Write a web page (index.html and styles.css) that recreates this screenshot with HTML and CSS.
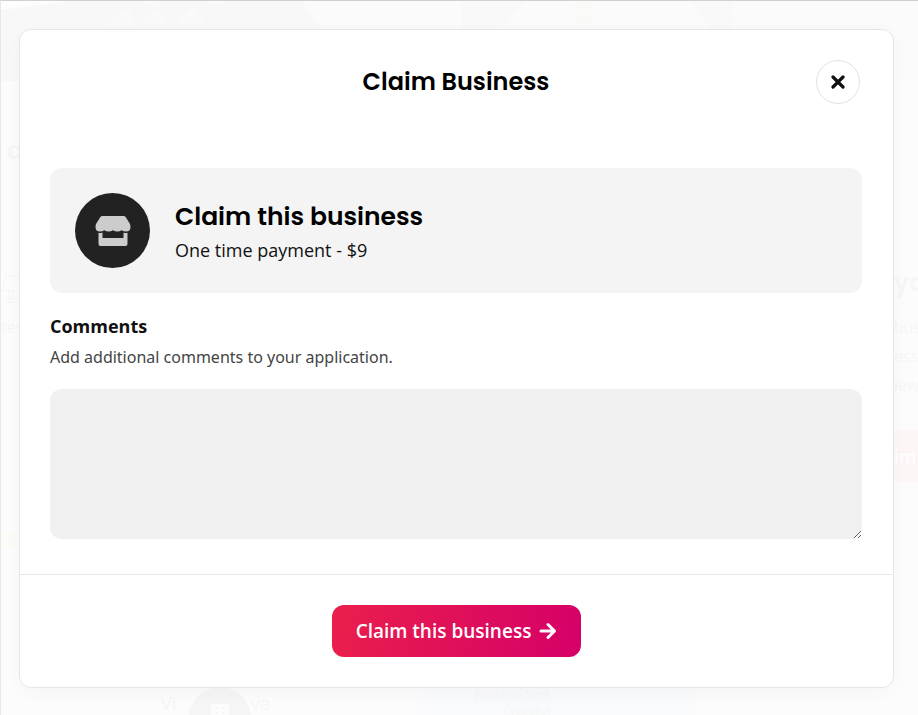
FILE: index.html
```html
<!DOCTYPE html>
<html lang="en">
<head>
    <meta charset="UTF-8">
    <meta name="viewport" content="width=device-width, initial-scale=1.0">
    <title>Claim Business</title>
    <link rel="stylesheet" href="styles.css">
</head>
<body>

    <!-- Faded listing page behind the modal -->
    <div class="backdrop" aria-hidden="true">
        <svg class="backdrop-cover" viewBox="0 0 918 80" preserveAspectRatio="none">
            <rect width="918" height="80" fill="#fbfbfb"/>
            <path d="M0 0H300L322 30V80H0z" fill="#f8f8f8"/>
            <path d="M0 9L70 0H0z" fill="#fdfdfd"/>
            <path d="M143 0h22l-11 6zM203 0h22l-10 5zM128 8l-26 18h33zM155 6l-16 17h28zM192 6l-16 17h28z" fill="#fafafa"/>
            <path d="M461 0h66l-30 30h-36zM690 0h42v30h-20z" fill="#f9f9f9"/>
            <path d="M568 0h24v30h-24z" fill="#fafaf8"/>
        </svg>
        <div class="backdrop-body">
            <div class="backdrop-left">
                <div class="ghost-title">o</div>
                <svg class="ghost-lamp" viewBox="0 0 20 28">
                    <path d="M5 1h12l3 15H1zM8 16v9M12 16v9M3 27l4-3h8l4 3z" fill="none" stroke="#f6f6f6"/>
                </svg>
                <div class="ghost-text">tes</div>
                <div class="ghost-band"></div>
            </div>
            <div class="backdrop-right">
                <div class="ghost-heading">yo</div>
                <div class="ghost-text">bus</div>
                <div class="ghost-text">ess</div>
                <div class="ghost-text">iew</div>
                <div class="ghost-button">im</div>
            </div>
        </div>
        <div class="backdrop-map">
            <span class="ghost-place">Vi</span>
            <svg class="ghost-pin" viewBox="0 0 62 62">
                <circle cx="31" cy="31" r="31" fill="#f5f5f5"/>
                <path d="M22 17h18v28H22z" fill="#fcfcfc"/>
                <path d="M27 20h2v2h-2zM33 20h2v2h-2zM27 25h2v2h-2zM33 25h2v2h-2z" fill="#f5f5f5"/>
            </svg>
            <span class="ghost-place">va</span>
            <span class="ghost-beach">Platja de Sant<br>Cristòfol</span>
        </div>
    </div>

    <div class="overlay">
        <div class="modal" role="dialog" aria-labelledby="modalTitle">
            <div class="modal-header">
                <h2 id="modalTitle">Claim Business</h2>
                <button type="button" class="close-button" aria-label="Close">
                    <svg viewBox="0 0 14 14" width="14" height="14">
                        <path d="M2 2l10 10M12 2L2 12" fill="none" stroke="#111" stroke-width="3.2" stroke-linecap="round"/>
                    </svg>
                </button>
            </div>

            <div class="modal-body">
                <div class="plan">
                    <div class="plan-icon">
                        <svg viewBox="0 0 36 30" width="36" height="30">
                            <path d="M7.500 0h21q1.500 0 2.300 1.200l3.900 6.300q.8 1.300.8 3.500Q35.500 15.500 31 15.500q-2.300 0-4.300-1.200-2 1.200-4.400 1.200t-4.300-1.200q-2 1.200-4.300 1.200t-4.400-1.200Q7.300 15.500 5 15.500.5 15.500.5 11q0-2.200.8-3.500l3.900-6.300Q6 0 7.500 0z" fill="#ccc"/>
                            <path d="M3.500 16.800q2.200.4 4-.4V22h21v-5.600q1.800.8 4 .4V28q0 2-2 2h-25q-2 0-2-2z" fill="#ccc"/>
                        </svg>
                    </div>
                    <div>
                        <h3>Claim this business</h3>
                        <p>One time payment - $9</p>
                    </div>
                </div>

                <label for="comments">Comments</label>
                <p class="hint" id="commentsHint">Add additional comments to your application.</p>
                <textarea id="comments" aria-describedby="commentsHint"></textarea>
            </div>

            <div class="modal-footer">
                <button type="button" class="submit-button">
                    Claim this business
                    <svg viewBox="0 0 18 18" width="18" height="18">
                        <path d="M2 9h13M9 2.500L15.500 9 9 15.500" fill="none" stroke="#fff" stroke-width="3" stroke-linecap="round" stroke-linejoin="round"/>
                    </svg>
                </button>
            </div>
        </div>
    </div>

</body>
</html>
```

FILE: styles.css
```css
* {
    box-sizing: border-box;
}
body {
    margin: 0;
    min-height: 100vh;
    font-family: "Open Sans", "Noto Sans", sans-serif;
    color: #111;
    background-color: #fcfcfc;
}
h2, h3, p {
    margin: 0;
}
button {
    cursor: pointer;
}

/* Page behind the modal */
.backdrop {
    position: absolute;
    inset: 0;
    display: flex;
    flex-direction: column;
    overflow: hidden;
    border-top: 1px solid #d0d0d0;
    border-left: 1px solid #e8e8e8;
    color: #f6f6f6;
}
.backdrop-cover {
    display: block;
    width: 100%;
    height: 80px;
    flex: none;
}
.backdrop-body {
    display: flex;
    flex: 1;
    justify-content: space-between;
}
.backdrop-left {
    width: 19px;
    padding-top: 52px;
    overflow: hidden;
}
.ghost-title, .ghost-heading {
    font-family: Poppins, Inter, sans-serif;
    font-size: 25px;
    font-weight: 600;
    line-height: 36px;
}
.ghost-title {
    padding-left: 6px;
}
.ghost-lamp {
    display: block;
    width: 20px;
    height: 28px;
    margin-top: 106px;
}
.ghost-text {
    font-size: 16px;
    line-height: 29px;
}
.backdrop-left .ghost-text {
    margin-top: 10px;
}
.ghost-band {
    height: 16px;
    margin-top: 190px;
    background-color: #fbfbf7;
}
.backdrop-right {
    width: 24px;
    padding-top: 184px;
    overflow: hidden;
}
.ghost-heading {
    margin-bottom: 12px;
}
.ghost-button {
    height: 52px;
    margin-top: 30px;
    font-size: 18px;
    font-weight: 600;
    line-height: 52px;
    color: #fff;
    background-color: #fcf6f7;
}
.backdrop-map {
    display: flex;
    height: 28px;
    flex: none;
    padding-left: 160px;
    background: linear-gradient(90deg, #fcfcfc 40%, #f9fafc 50%, #f9fafc 75%, #fcfcfc 76%);
}
.ghost-place {
    font-size: 18px;
    line-height: 32px;
}
.ghost-place:first-child {
    width: 28px;
}
.ghost-pin {
    width: 62px;
    height: 62px;
}
.ghost-beach {
    margin-left: 204px;
    font-size: 12px;
    line-height: 16px;
    text-align: right;
}

/* Modal */
.overlay {
    position: relative;
    min-height: 100vh;
    padding: 29px 24px 27px 19px;
}
.modal {
    border: 1px solid #e6e6e6;
    border-radius: 12px;
    background-color: #fff;
    box-shadow: 0 4px 20px rgba(0, 0, 0, 0.03);
}
.modal-header {
    display: grid;
    grid-template-columns: 44px 1fr 44px;
    align-items: center;
    padding: 30px 33px 30px 32px;
}
.modal-header h2 {
    grid-column: 2;
    text-align: center;
}
h2, h3 {
    font-family: Poppins, Inter, sans-serif;
    font-weight: 600;
    color: #000;
}
h2 {
    font-size: 24px;
    line-height: 38px;
}
h3 {
    font-size: 25px;
    line-height: 38px;
}
.close-button {
    display: flex;
    align-items: center;
    justify-content: center;
    width: 44px;
    height: 44px;
    padding: 0;
    border: 1px solid #e2e2e2;
    border-radius: 50%;
    background-color: #fff;
}
.modal-body {
    padding: 34px 31px 35px 30px;
}
.plan {
    display: flex;
    align-items: center;
    gap: 25px;
    padding: 25px;
    border-radius: 12px;
    background-color: #f4f4f4;
}
.plan-icon {
    display: flex;
    align-items: center;
    justify-content: center;
    width: 75px;
    height: 75px;
    border-radius: 50%;
    background-color: #222;
}
.plan p {
    font-size: 18px;
    font-weight: 500;
    line-height: 28px;
}
label {
    display: block;
    margin-top: 18px;
    font-size: 18px;
    font-weight: 700;
    line-height: 30px;
}
.hint {
    font-family: "Noto Sans", sans-serif;
    font-size: 16px;
    line-height: 32px;
    color: #444;
}
textarea {
    display: block;
    width: 100%;
    height: 150px;
    margin-top: 16px;
    padding: 16px;
    border: 0;
    border-radius: 12px;
    font: inherit;
    background-color: #f0f0f0;
    resize: vertical;
}
.modal-footer {
    display: flex;
    justify-content: center;
    padding: 30px;
    border-top: 1px solid #e8e8e8;
}
.submit-button {
    display: flex;
    align-items: center;
    gap: 8px;
    height: 52px;
    padding: 0 24px;
    border: 0;
    border-radius: 12px;
    font-family: inherit;
    font-size: 19px;
    font-weight: 600;
    color: #fff;
    background: linear-gradient(100deg, #ea1f4b, #d60069);
}
```
